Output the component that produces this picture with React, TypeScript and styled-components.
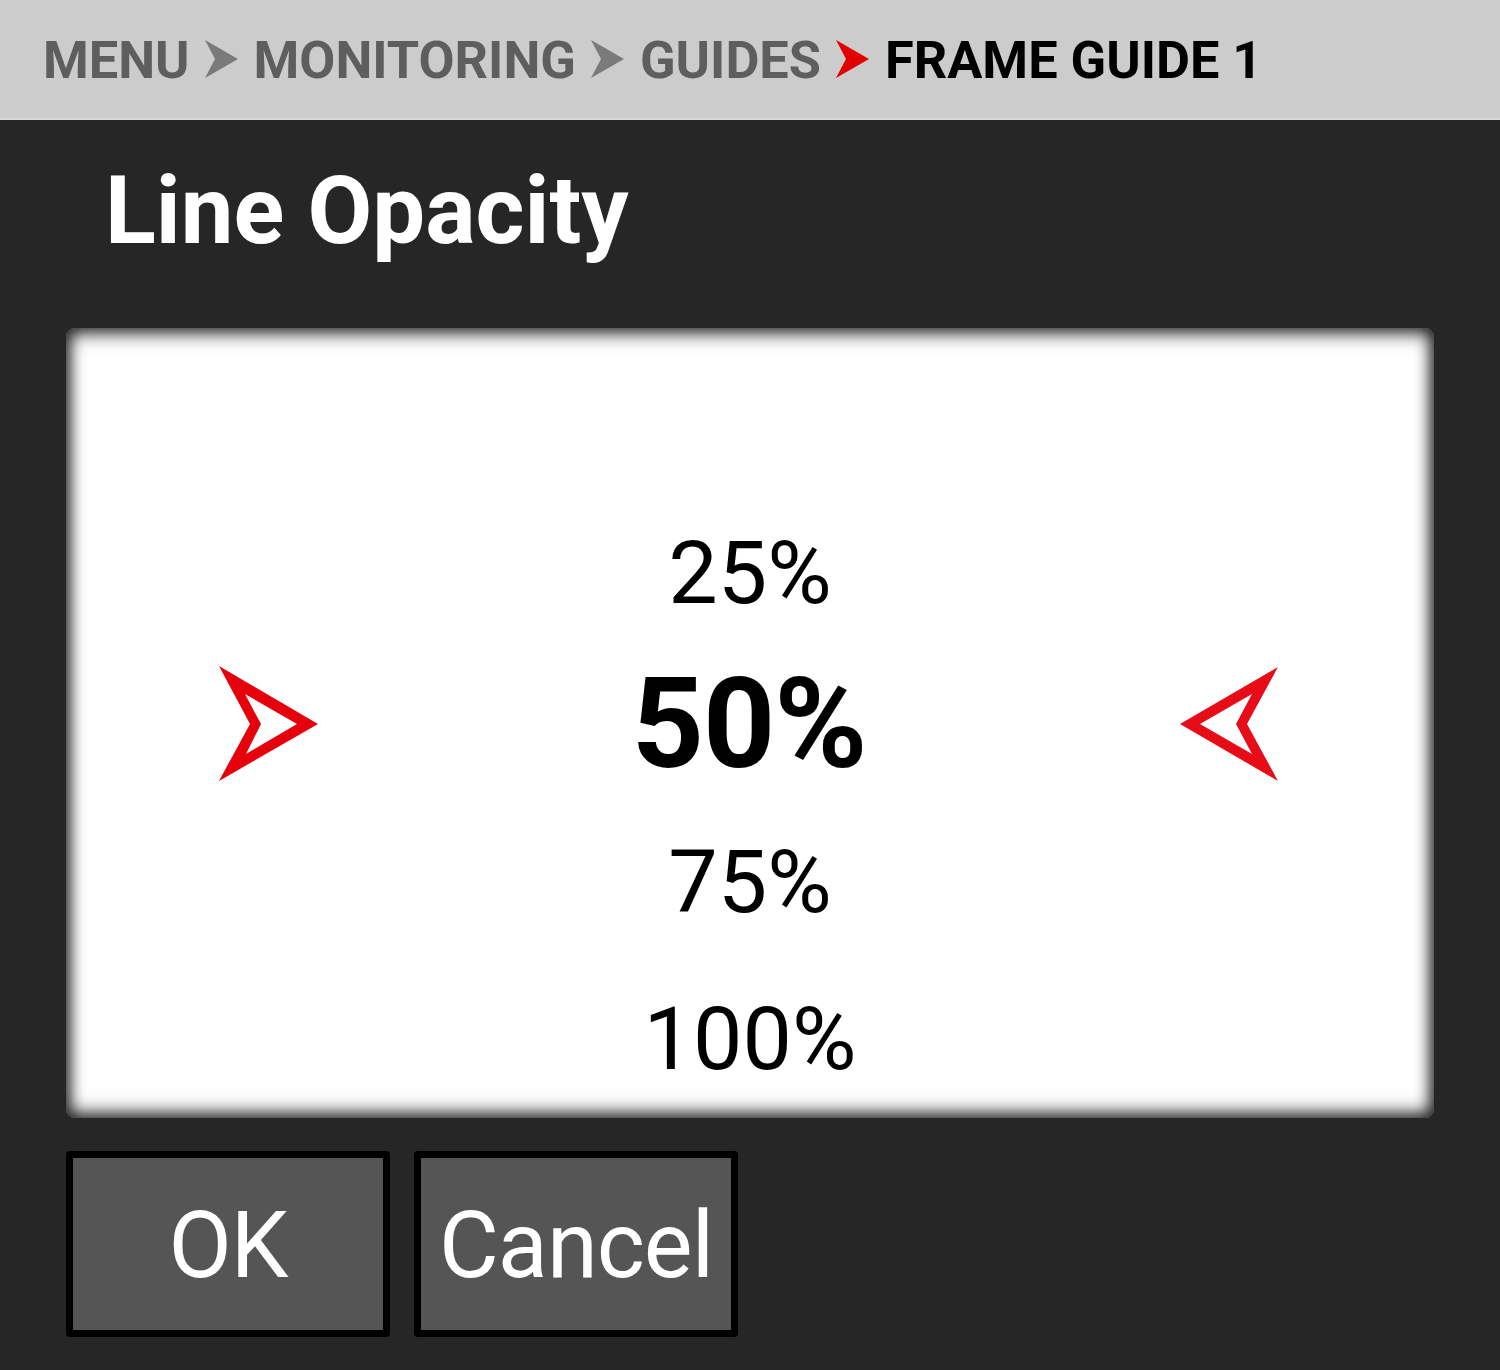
import React from "react";
import styled, { createGlobalStyle } from "styled-components";

const Global = createGlobalStyle`
  html, body { margin: 0; padding: 0; background: #262626; }
  body { font-family: Roboto, "Liberation Sans", sans-serif; }
`;

const Page = styled.div`
  width: 1500px;
  height: 1370px;
  background: #262626;
  display: flex;
  flex-direction: column;
  overflow: hidden;
  & > * { flex-shrink: 0; }
`;

const Header = styled.header`
  height: 118px;
  background: #cccccc;
  border-bottom: 2px solid #d8d8d8;
  display: flex;
  align-items: center;
  padding-left: 43px;
  gap: 15px;
  box-sizing: content-box;
`;

const Crumb = styled.span<{ $current?: boolean }>`
  font-family: Roboto, "Liberation Sans", sans-serif;
  font-weight: 700;
  font-size: 52.3px;
  line-height: 1;
  color: ${(p) => (p.$current ? "#000000" : "#5e5e5e")};
  padding-top: 2px;
`;

const Chevron = ({ color }: { color: string }) => (
  <svg width="34" height="38" viewBox="0 0 34 38" style={{ display: "block" }}>
    <path d="M0 0 L33 19 L0 38 L10 19 Z" fill={color} />
  </svg>
);

const Title = styled.h1`
  margin: 44px 0 0 105px;
  font-family: Roboto, "Liberation Sans", sans-serif;
  font-weight: 700;
  font-size: 94px;
  color: #ffffff;
  line-height: 1;
`;

const Panel = styled.div`
  margin: 70px 0 0 66px;
  width: 1368px;
  height: 790px;
  background: #ffffff;
  border-radius: 9px;
  box-shadow: inset 0 7px 18px rgba(0, 0, 0, 0.55), inset 0 -7px 18px rgba(0, 0, 0, 0.55),
    inset 5px 0 14px rgba(0, 0, 0, 0.35), inset -5px 0 14px rgba(0, 0, 0, 0.35);
  display: flex;
  flex-direction: column;
  align-items: stretch;
  padding-top: 176px;
  box-sizing: border-box;
`;

const Option = styled.div<{ $h: number }>`
  height: ${(p) => p.$h}px;
  display: flex;
  align-items: center;
  justify-content: center;
  font-family: Roboto, "Liberation Sans", sans-serif;
  font-size: 88px;
  font-weight: 400;
  color: #000;
  line-height: 1;
`;

const SelectedRow = styled.div`
  height: 165px;
  display: flex;
  align-items: center;
  justify-content: space-between;
  padding: 0 155px 0 153px;
`;

const SelectedValue = styled.span`
  font-family: Roboto, "Liberation Sans", sans-serif;
  font-weight: 700;
  font-size: 126px;
  line-height: 1;
  color: #000;
  letter-spacing: -1px;
`;

const ArrowRight = () => (
  <svg width="100" height="116" viewBox="219 665 100 116" style={{ display: "block" }}>
    <path
      fillRule="evenodd"
      fill="#e6000c"
      d="M219 665 L318 723 L219 780 L250 723 Z M245 693 L261 723 L246 753 L297 723 Z"
    />
  </svg>
);

const ArrowLeft = () => (
  <svg width="100" height="116" viewBox="1180 665 100 116" style={{ display: "block" }}>
    <path
      fillRule="evenodd"
      fill="#e60c18"
      d="M1279 666 L1181 723 L1279 780 L1248 723 Z M1253 693 L1201 723 L1253 753 L1237 723 Z"
    />
  </svg>
);

const ButtonRow = styled.div`
  display: flex;
  gap: 24px;
  margin: 33px 0 0 66px;
`;

const Button = styled.button`
  width: 324px;
  height: 186px;
  background: #555555;
  border: 7px solid #000000;
  border-radius: 4px;
  box-sizing: border-box;
  color: #ffffff;
  font-family: Roboto, "Liberation Sans", sans-serif;
  font-size: 92px;
  font-weight: 400;
  line-height: 1;
  padding: 4px 0 0;
  display: flex;
  align-items: center;
  justify-content: center;
  letter-spacing: -1px;
`;

export default function App() {
  return (
    <Page>
      <Global />
      <Header>
        <Crumb>MENU</Crumb>
        <Chevron color="#7a7a7a" />
        <Crumb>MONITORING</Crumb>
        <Chevron color="#7a7a7a" />
        <Crumb>GUIDES</Crumb>
        <Chevron color="#e00000" />
        <Crumb $current>FRAME GUIDE 1</Crumb>
      </Header>
      <Title>Line Opacity</Title>
      <Panel>
        <Option $h={139}>25%</Option>
        <SelectedRow>
          <ArrowRight />
          <SelectedValue>50%</SelectedValue>
          <ArrowLeft />
        </SelectedRow>
        <Option $h={155}>75%</Option>
        <Option $h={160}>100%</Option>
      </Panel>
      <ButtonRow>
        <Button>OK</Button>
        <Button>Cancel</Button>
      </ButtonRow>
    </Page>
  );
}
